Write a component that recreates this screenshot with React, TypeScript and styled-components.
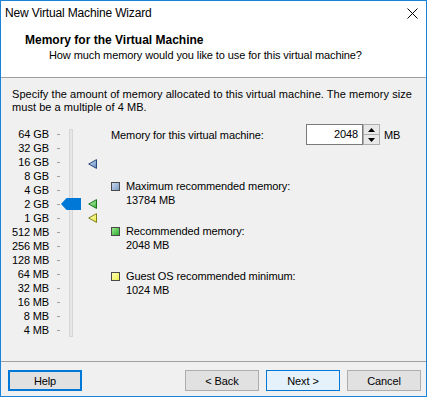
import styled, { createGlobalStyle } from 'styled-components';

const GlobalStyle = createGlobalStyle`
  html, body {
    margin: 0;
    padding: 0;
    background: #f0f0f0;
  }
  body {
    font-family: "Liberation Sans", Arial, sans-serif;
    font-size: 11px;
    letter-spacing: -0.1px;
    color: #000;
  }
`;

const Window = styled.div`
  width: 427px;
  height: 397px;
  box-sizing: border-box;
  border: 1px solid #1883d7;
  display: flex;
  flex-direction: column;
  background: #f0f0f0;
`;

const TitleBar = styled.div`
  flex: none;
  height: 30px;
  box-sizing: border-box;
  padding: 4px 8px 0 4px;
  background: #fff;
  display: flex;
  justify-content: space-between;
  align-items: flex-start;
  line-height: 16px;
  font-size: 12px;
  letter-spacing: -0.15px;
`;

const CloseIcon = styled.svg`
  margin-top: 3px;
  width: 11px;
  height: 11px;
`;

const Header = styled.div`
  flex: none;
  height: 47px;
  box-sizing: border-box;
  padding: 2px 0 0 24px;
  background: #fff;
  border-bottom: 1px solid #a0a0a0;
  display: flex;
  flex-direction: column;
  gap: 1px;
  line-height: 14px;
  h1 {
    margin: 0;
    font-size: 12px;
    font-weight: 700;
    letter-spacing: 0;
  }
  p {
    margin: 0 0 0 24px;
  }
`;

const Body = styled.div`
  flex: 1;
  padding: 10px 0 0 11px;
`;

const Description = styled.p`
  margin: 0;
  line-height: 13px;
  letter-spacing: 0.05px;
  white-space: nowrap;
`;

const MainRow = styled.div`
  display: flex;
  align-items: flex-start;
  margin-top: 10px;
`;

const SliderGrid = styled.div`
  display: grid;
  grid-template-columns: 37px 8px 3px 1px 20px 7px 9px;
  grid-template-rows: repeat(15, 14px);
  padding-top: 3px;
`;

const StepLabel = styled.span<{ $row: number }>`
  grid-column: 1;
  grid-row: ${(p) => p.$row};
  text-align: right;
  line-height: 14px;
  white-space: nowrap;
`;

const Tick = styled.span<{ $row: number }>`
  grid-column: 3;
  grid-row: ${(p) => p.$row};
  align-self: center;
  height: 1px;
  background: #a0a0a0;
`;

const Track = styled.div`
  grid-column: 5;
  grid-row: 1 / -1;
  justify-self: center;
  width: 4px;
  box-sizing: border-box;
  margin-top: 2px;
  background: #e7e7e7;
  border: 1px solid #d6d6d6;
`;

const Thumb = styled.svg<{ $row: number }>`
  grid-column: 5;
  grid-row: ${(p) => p.$row};
  align-self: center;
  width: 20px;
  height: 12px;
`;

const MarkerIcon = styled.svg<{ $row: number; $shift: number }>`
  grid-column: 7;
  grid-row: ${(p) => p.$row};
  align-self: center;
  width: 9px;
  height: 10px;
  transform: translateY(${(p) => p.$shift}px);
`;

const RightColumn = styled.div`
  display: flex;
  flex-direction: column;
  margin-left: 14px;
`;

const MemoryRow = styled.div`
  display: flex;
  align-items: center;
  height: 21px;
`;

const MemoryLabel = styled.span`
  width: 195px;
`;

const SpinBox = styled.div`
  display: flex;
  width: 74px;
  height: 21px;
`;

const SpinInput = styled.div`
  width: 57px;
  box-sizing: border-box;
  border: 1px solid #7a7a7a;
  background: #fff;
  text-align: right;
  padding-right: 4px;
  line-height: 19px;
`;

const SpinButtons = styled.div`
  display: flex;
  flex-direction: column;
  width: 17px;
  box-sizing: border-box;
  border: 1px solid #adadad;
  border-left: none;
`;

const SpinButton = styled.div<{ $down?: boolean }>`
  flex: 1;
  display: flex;
  align-items: center;
  justify-content: center;
  background: #e8e8e8;
  border-left: 1px solid #adadad;
  border-top: ${(p) => (p.$down ? '1px solid #adadad' : 'none')};
`;

const Unit = styled.span`
  margin-left: 4px;
`;

const Legend = styled.div`
  display: flex;
  flex-direction: column;
  gap: 17px;
  margin-top: 34px;
`;

const LegendItem = styled.div`
  display: flex;
  gap: 6px;
  line-height: 14px;
`;

const Swatch = styled.span<{ $from: string; $to: string }>`
  flex: none;
  width: 9px;
  height: 9px;
  box-sizing: border-box;
  margin-top: 3px;
  border: 1px solid #4a4a4a;
  background: linear-gradient(135deg, ${(p) => p.$from}, ${(p) => p.$to});
`;

const Footer = styled.div`
  flex: none;
  height: 35px;
  box-sizing: border-box;
  border-top: 1px solid #a0a0a0;
  padding: 8px 5px 0 7px;
  display: flex;
  align-items: flex-start;
  gap: 7px;
`;

const Button = styled.button<{ $variant?: 'focus' | 'default' }>`
  width: 74px;
  height: 21px;
  box-sizing: border-box;
  padding: 0;
  font-family: "Liberation Sans", Arial, sans-serif;
  font-size: 11px;
  letter-spacing: -0.1px;
  color: #000;
  background: ${(p) => (p.$variant === 'default' ? '#e5f1fb' : '#e1e1e1')};
  border: ${(p) =>
    p.$variant === 'focus'
      ? '2px solid #0078d7'
      : p.$variant === 'default'
      ? '1px solid #0078d7'
      : '1px solid #adadad'};
  &:first-child {
    margin-right: auto;
  }
`;

const steps = ['64 GB', '32 GB', '16 GB', '8 GB', '4 GB', '2 GB', '1 GB', '512 MB', '256 MB', '128 MB', '64 MB', '32 MB', '16 MB', '8 MB', '4 MB'];

const markers = [
  { id: 'max', row: 3, shift: 2, light: '#dce6f4', dark: '#5d86bf', stroke: '#29497a' },
  { id: 'rec', row: 6, shift: 0, light: '#d4f5c8', dark: '#37b337', stroke: '#1d741d' },
  { id: 'min', row: 7, shift: 0, light: '#ffffd0', dark: '#e8e83a', stroke: '#80801a' },
];

const legend = [
  { title: 'Maximum recommended memory:', value: '13784 MB', from: '#c7d6eb', to: '#7f9fcb' },
  { title: 'Recommended memory:', value: '2048 MB', from: '#9be68e', to: '#2fae2f' },
  { title: 'Guest OS recommended minimum:', value: '1024 MB', from: '#ffffb8', to: '#f0f050' },
];

const Marker = ({ row, shift, light, dark, stroke, id }: (typeof markers)[number]) => (
  <MarkerIcon $row={row} $shift={shift} viewBox="0 0 9 10">
    <defs>
      <linearGradient id={`g-${id}`} x1="0" y1="0" x2="1" y2="1">
        <stop offset="0" stopColor={light} />
        <stop offset="1" stopColor={dark} />
      </linearGradient>
    </defs>
    <polygon points="0.7,5 8.5,0.6 8.5,9.4" fill={`url(#g-${id})`} stroke={stroke} strokeWidth="1" />
  </MarkerIcon>
);

export default function App() {
  return (
    <>
      <GlobalStyle />
      <Window>
        <TitleBar>
          <span>New Virtual Machine Wizard</span>
          <CloseIcon viewBox="0 0 11 11">
            <path d="M0.5 0.5 L10.5 10.5 M10.5 0.5 L0.5 10.5" stroke="#000" strokeWidth="1" />
          </CloseIcon>
        </TitleBar>
        <Header>
          <h1>Memory for the Virtual Machine</h1>
          <p>How much memory would you like to use for this virtual machine?</p>
        </Header>
        <Body>
          <Description>
            Specify the amount of memory allocated to this virtual machine. The memory size
            <br />
            must be a multiple of 4 MB.
          </Description>
          <MainRow>
            <SliderGrid>
              {steps.map((s, i) => (
                <StepLabel key={s} $row={i + 1}>{s}</StepLabel>
              ))}
              {steps.map((s, i) => (
                <Tick key={s} $row={i + 1} />
              ))}
              <Track />
              <Thumb $row={6} viewBox="0 0 20 12">
                <polygon points="0,6 5.5,0 20,0 20,12 5.5,12" fill="#0078d7" />
              </Thumb>
              {markers.map((m) => (
                <Marker key={m.id} {...m} />
              ))}
            </SliderGrid>
            <RightColumn>
              <MemoryRow>
                <MemoryLabel>Memory for this virtual machine:</MemoryLabel>
                <SpinBox>
                  <SpinInput>2048</SpinInput>
                  <SpinButtons>
                    <SpinButton>
                      <svg width="7" height="4" viewBox="0 0 7 4"><polygon points="0,4 3.5,0 7,4" fill="#000" /></svg>
                    </SpinButton>
                    <SpinButton $down>
                      <svg width="7" height="4" viewBox="0 0 7 4"><polygon points="0,0 7,0 3.5,4" fill="#000" /></svg>
                    </SpinButton>
                  </SpinButtons>
                </SpinBox>
                <Unit>MB</Unit>
              </MemoryRow>
              <Legend>
                {legend.map((l) => (
                  <LegendItem key={l.title}>
                    <Swatch $from={l.from} $to={l.to} />
                    <div>
                      <div>{l.title}</div>
                      <div>{l.value}</div>
                    </div>
                  </LegendItem>
                ))}
              </Legend>
            </RightColumn>
          </MainRow>
        </Body>
        <Footer>
          <Button $variant="focus">Help</Button>
          <Button>&lt; Back</Button>
          <Button $variant="default">Next &gt;</Button>
          <Button>Cancel</Button>
        </Footer>
      </Window>
    </>
  );
}
